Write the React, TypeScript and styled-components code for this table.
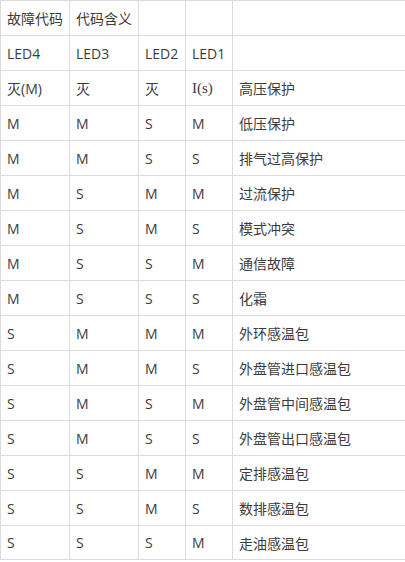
import React from 'react'
import styled, { createGlobalStyle } from 'styled-components'

const rows: string[][] = [
  ['故障代码', '代码含义', '', '', ''],
  ['LED4', 'LED3', 'LED2', 'LED1', ''],
  ['灭(M)', '灭', '灭', 'I(s)', '高压保护'],
  ['M', 'M', 'S', 'M', '低压保护'],
  ['M', 'M', 'S', 'S', '排气过高保护'],
  ['M', 'S', 'M', 'M', '过流保护'],
  ['M', 'S', 'M', 'S', '模式冲突'],
  ['M', 'S', 'S', 'M', '通信故障'],
  ['M', 'S', 'S', 'S', '化霜'],
  ['S', 'M', 'M', 'M', '外环感温包'],
  ['S', 'M', 'M', 'S', '外盘管进口感温包'],
  ['S', 'M', 'S', 'M', '外盘管中间感温包'],
  ['S', 'M', 'S', 'S', '外盘管出口感温包'],
  ['S', 'S', 'M', 'M', '定排感温包'],
  ['S', 'S', 'M', 'S', '数排感温包'],
  ['S', 'S', 'S', 'M', '走油感温包']
]

const widths = [69, 69, 47, 47, 173]

// the one cell that the source page set in a serif face
const serifText = 'I(s)'

const GlobalStyle = createGlobalStyle`
  html, body {
    margin: 0;
    padding: 0;
    background: #fff;
  }
`

export default function App() {
  return (
    <>
      <GlobalStyle />
      <Table>
        <colgroup>
          {widths.map((w, i) => (
            <col key={i} style={{ width: w }} />
          ))}
        </colgroup>
        <tbody>
          {rows.map((row, r) => (
            <Row key={r}>
              {row.map((text, c) => (
                <Cell key={c} $serif={text === serifText}>
                  {text}
                </Cell>
              ))}
            </Row>
          ))}
        </tbody>
      </Table>
    </>
  )
}

const Table = styled.table`
  width: 405px;
  table-layout: fixed;
  border-collapse: collapse;
  font-family: 'Open Sans', 'Noto Sans CJK SC', sans-serif;
  font-size: 14px;
  color: #3c3c3c;
`

const Row = styled.tr`
  height: 35px;

  &:last-child {
    height: 34px;
  }
`

const Cell = styled.td<{ $serif?: boolean }>`
  border: 1px solid #dcdcdc;
  padding: 0 0 0 6px;
  vertical-align: middle;
  white-space: nowrap;
  overflow: hidden;
  font-family: ${p =>
    p.$serif
      ? "'Liberation Serif', 'Noto Sans CJK SC', serif"
      : "'Open Sans', 'Noto Sans CJK SC', sans-serif"};
  font-size: ${p => (p.$serif ? '15px' : '14px')};
`
